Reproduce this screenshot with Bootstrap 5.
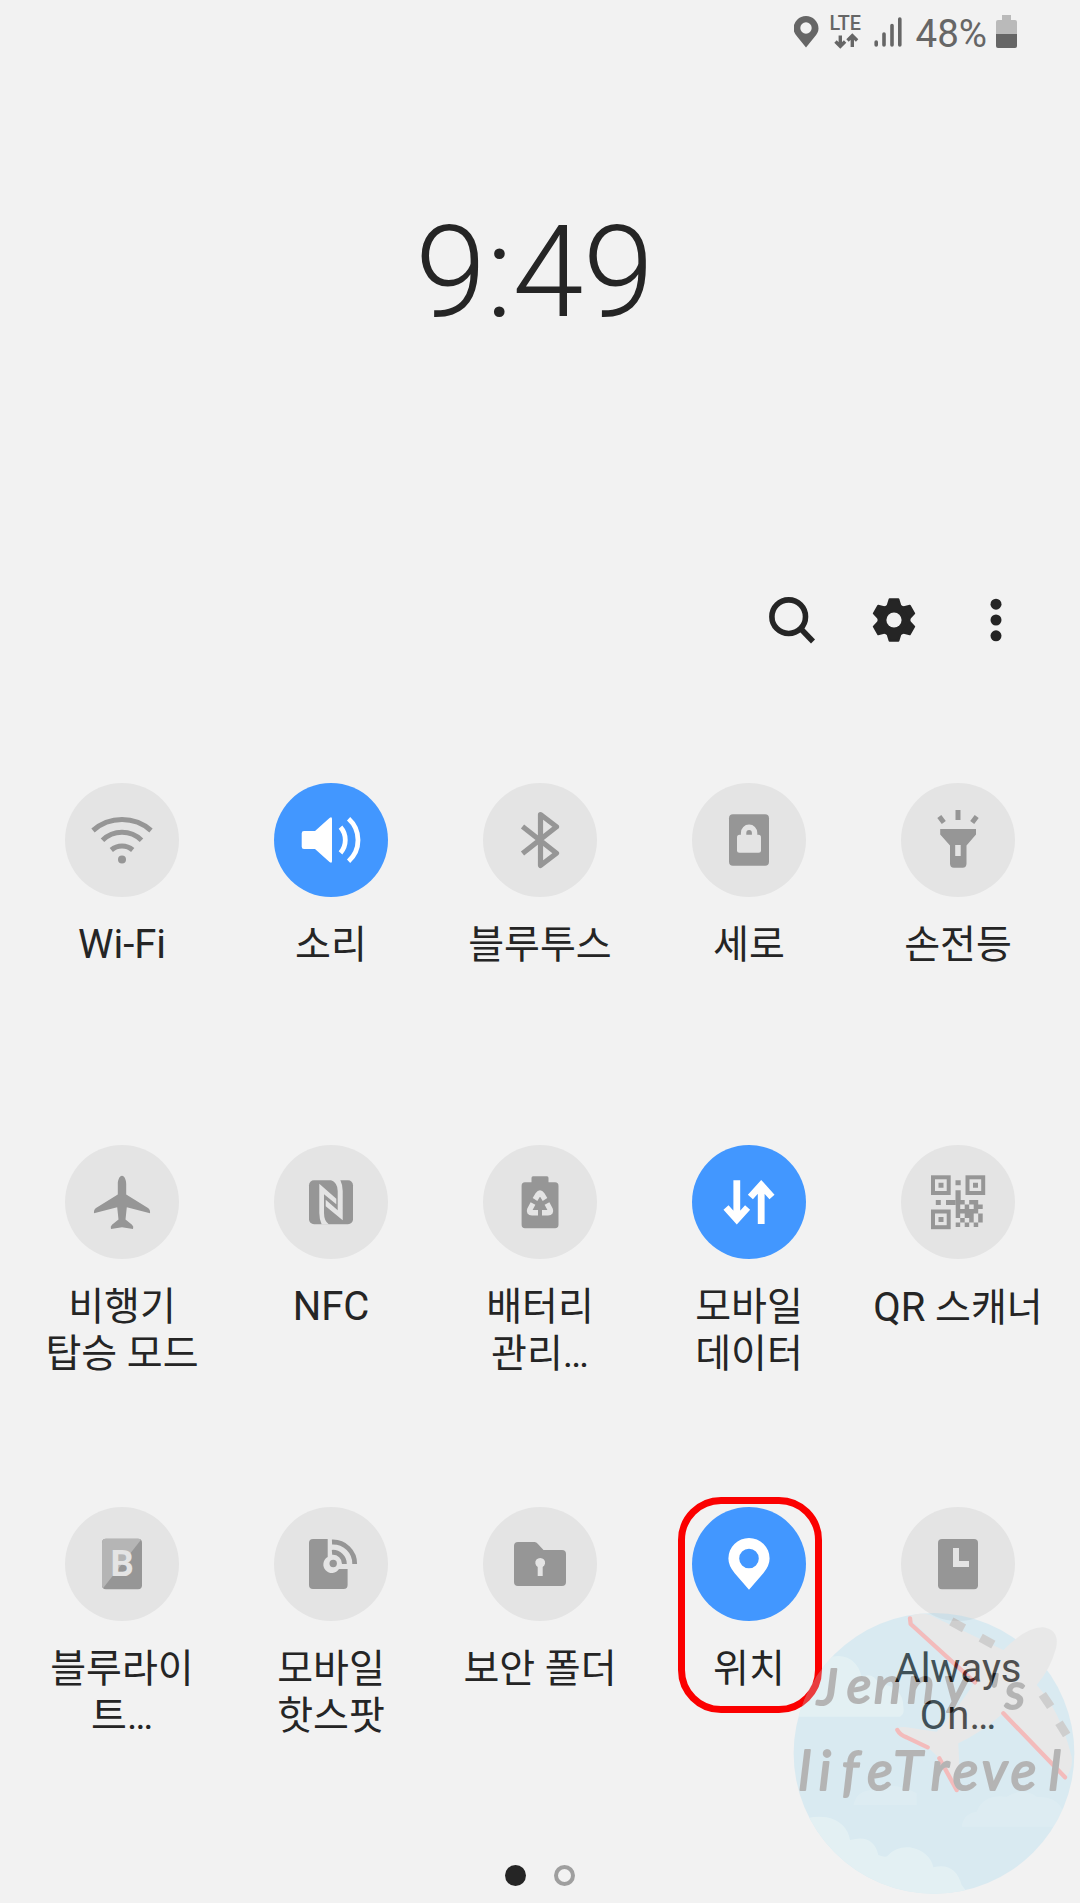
<!DOCTYPE html>
<html lang="ko">
<head>
<meta charset="utf-8">
<meta name="viewport" content="width=device-width, initial-scale=1">
<title>빠른 설정</title>
<link href="https://cdn.jsdelivr.net/npm/bootstrap@5.3.0/dist/css/bootstrap.min.css" rel="stylesheet">
<style>
body{background:#f2f2f2;color:#252525;font-family:Roboto,"Noto Sans CJK KR",sans-serif}
.panel{width:1080px;height:1903px}
.statusbar{height:66px;padding-right:62px;color:#666}
.pct{font-size:38.5px;line-height:68px;font-weight:400}
.clock{height:428px;padding:141px 11px 0 0}
.clock-time{font-size:128px;font-weight:300;line-height:130px;letter-spacing:-.4px}
.tools{height:289px;padding:101px 59px 0 0;gap:52px}
.tools button{width:50px;height:50px;color:#252525}
.tiles{padding:0 17.5px}
.tile{flex:0 0 209px;height:362px}
.disc{width:114px;height:114px;background:#e4e4e4;color:#969696}
.disc.on{background:#4297ff;color:#fff}
.disc svg,.tools svg{display:block}
.tile-label{font-size:39px;line-height:47px;margin-top:25px;white-space:nowrap}
.latin{font-size:40px}
.tile-label.latin{margin-top:24px}
.ring{left:33.5px;top:-10px;width:144px;height:216px;border:7px solid #fb0000;border-radius:43px}
.pager{left:505px;top:1865px;gap:28px}
.dot{width:21px;height:21px;background:#252525}
.dot.off{background:none;border:4px solid #9f9f9f}
.stamp{left:785px;top:1605px;opacity:.25}
</style>
</head>
<body>
<main class="panel position-relative overflow-hidden">
  <header class="statusbar d-flex justify-content-end">
    <svg width="122" height="66" viewBox="793.500 -.5 122 66" fill="#666" aria-hidden="true">
      <path fill-rule="evenodd" d="M805.500 47L797 36.500Q793 32 793 28A12.500 12.500 0 0 1 818 28Q818 32 814 36.500ZM805.500 21.800a5.700 5.700 0 1 0 0 11.400a5.700 5.700 0 1 0 0-11.400Z"/>
      <text x="829" y="29" font-size="20" font-weight="500" textLength="31.500" lengthAdjust="spacingAndGlyphs">LTE</text>
      <path fill="none" stroke="#666" stroke-width="3.400" d="M839.800 35v11M835 41l4.800 4.800L844.600 41M851.800 46.500V35M847 40l4.800-4.800L856.600 40"/>
      <path fill="none" stroke="#666" stroke-width="3.600" stroke-linecap="round" d="M875.700 41.500v3M883.500 33.500v11M891.500 25v19.500M899.300 18.500v26"/>
    </svg>
    <span class="pct">48%</span>
    <svg class="ms-2" width="23" height="66" viewBox="0 0 23 66" aria-hidden="true">
      <path fill="#bababa" d="M7 15h9v5h4q2 0 2 2v12H1V22q0-2 2-2h4z"/><path fill="#666" d="M1 34h21v12q0 2-2 2H3q-2 0-2-2z"/>
    </svg>
  </header>

  <section class="clock text-center"><div class="clock-time">9:49</div></section>

  <nav class="tools d-flex justify-content-end">
    <button class="btn p-0 border-0" aria-label="검색"><svg width="50" height="50" viewBox="767 595 50 50"><g fill="none" stroke="#252525" stroke-width="5.600"><circle cx="788.700" cy="616.700" r="16.800"/><path d="M800.500 628.500L813 641.500"/></g></svg></button>
    <button class="btn p-0 border-0" aria-label="설정"><svg width="50" height="50" viewBox="-25 -25 50 50"><g fill="#252525"><circle r="16.500"/><path id="tooth" stroke="#252525" stroke-width="2" stroke-linejoin="round" d="M-4.400-20.800H4.400L6.800-13H-6.800Z"/><use href="#tooth" transform="rotate(60)"/><use href="#tooth" transform="rotate(120)"/><use href="#tooth" transform="rotate(180)"/><use href="#tooth" transform="rotate(240)"/><use href="#tooth" transform="rotate(300)"/></g><circle r="7.600" fill="#f2f2f2"/></svg></button>
    <button class="btn p-0 border-0" aria-label="더보기"><svg width="50" height="50" viewBox="-25 -25 50 50" fill="#252525"><circle cy="-15.800" r="5.500"/><circle r="5.500"/><circle cy="15.800" r="5.500"/></svg></button>
  </nav>

  <section class="tiles d-flex flex-wrap">
    <div class="tile d-flex flex-column align-items-center">
      <div class="disc rounded-circle"><svg width="114" height="114"><g fill="none" stroke="currentColor" stroke-width="5"><path d="M28 47.500A43.900 43.900 0 0 1 86 47.500M37.500 57.300A27.800 27.800 0 0 1 76.500 57.300M46.300 67A16.400 16.400 0 0 1 67.700 67"/></g><circle cx="57" cy="76.500" r="4" fill="currentColor"/></svg></div>
      <div class="tile-label latin text-center">Wi-Fi</div>
    </div>
    <div class="tile d-flex flex-column align-items-center">
      <div class="disc on rounded-circle"><svg width="114" height="114"><path fill="currentColor" d="M30 48H41L55.500 35Q58 33 58 36V78Q58 81 55.500 79L41 66H30Q27.700 66 27.700 63.700V50.300Q27.700 48 30 48Z"/><path fill="none" stroke="currentColor" stroke-width="4.800" d="M66.500 44.200A19.500 19.500 0 0 1 66.500 69.800M74.600 35.800A28.600 28.600 0 0 1 74.600 78.200"/></svg></div>
      <div class="tile-label text-center">소리</div>
    </div>
    <div class="tile d-flex flex-column align-items-center">
      <div class="disc rounded-circle"><svg width="114" height="114"><path fill="none" stroke="currentColor" stroke-width="5.200" stroke-linejoin="round" d="M39.500 43.500L73.500 70.200L57.500 82.500V31.500L73.500 43.800L39.500 70.500"/></svg></div>
      <div class="tile-label text-center">블루투스</div>
    </div>
    <div class="tile d-flex flex-column align-items-center">
      <div class="disc rounded-circle"><svg width="114" height="114"><rect x="37" y="31.300" width="40" height="51.400" rx="4" fill="currentColor"/><rect x="45" y="51.700" width="24" height="18" rx="2.500" fill="#e4e4e4"/><path fill="none" stroke="#e4e4e4" stroke-width="5.400" d="M51.600 53V50A5.500 5.700 0 0 1 62.600 50V53"/></svg></div>
      <div class="tile-label text-center">세로</div>
    </div>
    <div class="tile d-flex flex-column align-items-center">
      <div class="disc rounded-circle"><svg width="114" height="114"><path fill="none" stroke="currentColor" stroke-width="5" d="M57 27V37M38.300 33.400L42.800 39.400M75.700 33.400L71.200 39.400"/><path fill="currentColor" fill-rule="evenodd" d="M39.200 46H75V51.500L65.500 62.500V80.500Q65.500 84.700 61.500 84.700H53Q49 84.700 49 80.500V62.500L39.200 51.500ZM54.200 62V73H59.700V62Z"/></svg></div>
      <div class="tile-label text-center">손전등</div>
    </div>

    <div class="tile d-flex flex-column align-items-center">
      <div class="disc rounded-circle"><svg width="114" height="114"><path fill="currentColor" d="M57 30.700C59.500 30.700 61.200 35 61.200 39V49.500L83 63Q85.500 64.800 85 68.300L61.800 62.300L60.500 74.500L67 79.800Q69 81.500 68 84L57 82.300L46 84Q45 81.500 47 79.800L53.500 74.500L52.200 62.300L29 68.300Q28.500 64.800 31 63L52.800 49.500V39C52.800 35 54.500 30.700 57 30.700Z"/></svg></div>
      <div class="tile-label text-center">비행기<br>탑승 모드</div>
    </div>
    <div class="tile d-flex flex-column align-items-center">
      <div class="disc rounded-circle"><svg width="114" height="114"><rect x="35" y="35.300" width="44" height="44" rx="5" fill="currentColor"/><path fill="#e4e4e4" d="M45.300 38.700L62.300 53.700V59.300L50 49.300V68Q50 76 55 79.500H47.700Q45.300 74 45.300 68ZM68.700 75.300L51.700 61.300V54.700L63.700 65.300V46Q63.700 38 57 35.100H66.300Q68.700 40 68.700 46Z"/></svg></div>
      <div class="tile-label latin text-center">NFC</div>
    </div>
    <div class="tile d-flex flex-column align-items-center">
      <div class="disc rounded-circle"><svg width="114" height="114"><path fill="currentColor" d="M50 31.300H64Q65.500 31.300 65.500 33V37.300H72Q75.500 37.300 75.500 41V79.500Q75.500 83.300 72 83.300H42Q38.600 83.300 38.600 79.500V41Q38.600 37.300 42 37.300H48.500V33Q48.500 31.300 50 31.300Z"/><g fill="none" stroke="#e4e4e4" stroke-width="5.400" stroke-linejoin="round"><path d="M52 54.500L55 49.500Q57 46.500 59 49.500L62 54.500"/><path d="M50 58.500L46.800 64.500Q45.500 67.800 49 67.800H55"/><path d="M64 58.500L67.200 64.500Q68.500 67.800 65 67.800H59"/></g></svg></div>
      <div class="tile-label text-center">배터리<br>관리…</div>
    </div>
    <div class="tile d-flex flex-column align-items-center">
      <div class="disc on rounded-circle"><svg width="114" height="114"><path fill="none" stroke="currentColor" stroke-width="6.800" d="M44.800 35.300V75M34 62.500L44.800 74.500L55.600 62.500M69.200 79V40M58.400 52L69.200 40L80 52"/></svg></div>
      <div class="tile-label text-center">모바일<br>데이터</div>
    </div>
    <div class="tile d-flex flex-column align-items-center">
      <div class="disc rounded-circle"><svg width="114" height="114"><g fill="none" stroke="currentColor" stroke-width="4"><rect x="32" y="32.300" width="15.700" height="15.700"/><rect x="66.500" y="32.300" width="15.700" height="15.700"/><rect x="32" y="66.500" width="15.700" height="15.700"/></g><path fill="currentColor" d="M37.500 37.800h5v5h-5zM72 37.800h5v5h-5zM37.500 72h5v5h-5zM54.500 35.300h5.200v5h-5.200zM54.500 45.300h5.200v9.700h-5.200zM34.800 55h5v5h-5zM45 55h9.700v5H45z"/><path fill="none" stroke="currentColor" stroke-width="4.500" d="M54.700 57.200h9m4.500 0h9M54.700 61.700h4.500m4.500 0h4.500m4.500 0h9M54.700 66.200h22.500M54.700 70.700h4.500m4.500 0h9m4.500 0h4.500M59.200 75.200h4.500m4.500 0h4.500m4.500 0h4.500M54.700 79.700h4.500m4.500 0h4.500m4.500 0h4.500"/></svg></div>
      <div class="tile-label text-center"><span class="latin">QR</span> 스캐너</div>
    </div>

    <div class="tile d-flex flex-column align-items-center">
      <div class="disc rounded-circle"><svg width="114" height="114"><rect x="37" y="31.700" width="40" height="50.600" rx="4" fill="currentColor"/><path fill="#b5b5b5" d="M41 31.700H73Q75 31.700 76 32.700L38 81.300Q37 80 37 78.300V35.700Q37 31.700 41 31.700Z"/><text x="45.600" y="69" font-size="36.500" font-weight="700" fill="#e4e4e4">B</text></svg></div>
      <div class="tile-label text-center">블루라이<br>트…</div>
    </div>
    <div class="tile d-flex flex-column align-items-center">
      <div class="disc rounded-circle"><svg width="114" height="114"><path fill="currentColor" d="M39 32H53.700V50A8.500 8.500 0 1 0 65 62H73.600V78Q73.600 82 69.600 82H39Q35 82 35 78V36Q35 32 39 32Z"/><circle cx="59.200" cy="56.500" r="3.700" fill="currentColor"/><path fill="none" stroke="currentColor" stroke-width="4.800" d="M58 45.300A11.500 11.500 0 0 1 70.400 57M58 35A21.800 21.800 0 0 1 80.700 57"/></svg></div>
      <div class="tile-label text-center">모바일<br>핫스팟</div>
    </div>
    <div class="tile d-flex flex-column align-items-center">
      <div class="disc rounded-circle"><svg width="114" height="114"><path fill="currentColor" fill-rule="evenodd" d="M35 35H51.500Q53.500 35 54.700 36.700L60.500 43H79Q83 43 83 47V75Q83 79 79 79H35Q31 79 31 75V39Q31 35 35 35ZM54.700 60V69H59.700V60A4.900 4.900 0 1 0 54.700 60Z"/></svg></div>
      <div class="tile-label text-center">보안 폴더</div>
    </div>
    <div class="tile position-relative d-flex flex-column align-items-center">
      <div class="disc on rounded-circle"><svg width="114" height="114"><path fill="currentColor" fill-rule="evenodd" d="M57 82.700L42.500 66Q36.400 58.500 36.400 51.500A20.600 20.600 0 0 1 77.600 51.500Q77.600 58.500 71.500 66ZM57 41.700a9.800 9.800 0 1 0 0 19.600a9.800 9.800 0 1 0 0-19.600Z"/></svg></div>
      <div class="tile-label text-center">위치</div>
      <div class="ring position-absolute"></div>
    </div>
    <div class="tile d-flex flex-column align-items-center">
      <div class="disc rounded-circle"><svg width="114" height="114"><rect x="37" y="32" width="40" height="50.300" rx="4" fill="currentColor"/><path fill="#e4e4e4" d="M52 41h6v13h10v6H52z"/></svg></div>
      <div class="tile-label latin text-center">Always<br>On…</div>
    </div>
  </section>

  <div class="pager position-absolute d-flex"><span class="dot rounded-circle"></span><span class="dot off rounded-circle"></span></div>

  <svg class="stamp position-absolute" width="295" height="298" viewBox="375 375 885 894">
    <defs><clipPath id="sky"><circle cx="822" cy="820" r="421"/></clipPath></defs>
    <circle cx="822" cy="820" r="421" fill="#90d4f0"/>
    <g clip-path="url(#sky)" fill="#b8eef8">
      <path d="M400 710V640Q440 640 465 600Q470 530 535 528Q590 530 605 590Q640 575 655 610Q730 620 730 680Q735 700 720 710Z"/>
      <path d="M400 1030Q450 1005 500 1012Q560 1025 570 1080Q640 1060 655 1125Q680 1135 685 1125Q710 1098 750 1102Q810 1115 820 1162Q885 1145 905 1215L940 1260H400Z"/>
      <path opacity=".4" d="M905 1040Q910 1000 950 995Q970 940 1040 950Q1090 920 1130 950Q1200 950 1210 1000V1040ZM580 975Q590 930 640 930Q700 900 770 940V975Z"/>
    </g>
    <path fill="#cdcdcd" d="M745 412Q770 395 810 405L1030 510Q1100 440 1150 442Q1200 450 1188 505Q1170 570 1130 615Q1200 690 1235 830Q1240 870 1215 893L1030 700Q960 760 895 790L898 860Q905 910 890 932L835 832L805 803L712 758Q705 738 740 742L830 755Q890 690 945 605Z"/>
    <path fill="none" stroke="#f81c1c" stroke-width="13" stroke-linecap="round" stroke-linejoin="round" d="M750 415L752 432L945 607M1030 700L1215 892M712 750Q720 765 740 772L803 802M838 835L890 930"/>
    <path fill="none" stroke="#686868" stroke-width="26" d="M874 424L912 445M962 473L1000 494M1147 643L1172 680M1197 728L1220 765"/>
    <g font-family="Lato,sans-serif" font-style="italic" fill="#000" stroke="#000" stroke-width="6" stroke-linejoin="round">
      <text x="472 560 642 742 852 985 1034" y="674 670 670 670 668 690 688" font-size="154">Jenny's</text>
      <text x="416 476 545 622 700 812 878 965 1052 1166" y="930" font-size="160">lifeTrevel</text>
    </g>
  </svg>
</main>
<script src="https://cdn.jsdelivr.net/npm/bootstrap@5.3.0/dist/js/bootstrap.bundle.min.js"></script>
</body>
</html>
